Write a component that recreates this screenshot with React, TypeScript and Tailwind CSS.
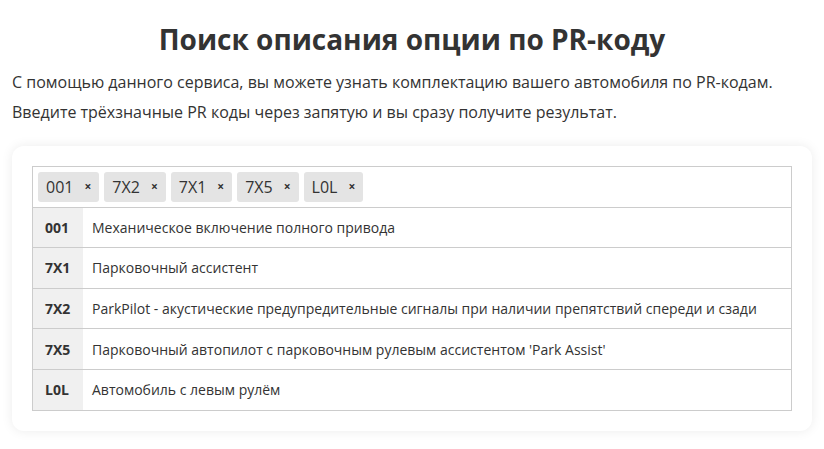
import React from "react";

const tags = ["001", "7X2", "7X1", "7X5", "L0L"];

const rows = [
  { code: "001", text: "Механическое включение полного привода" },
  { code: "7X1", text: "Парковочный ассистент" },
  {
    code: "7X2",
    text: "ParkPilot - акустические предупредительные сигналы при наличии препятствий спереди и сзади",
  },
  { code: "7X5", text: "Парковочный автопилот с парковочным рулевым ассистентом 'Park Assist'" },
  { code: "L0L", text: "Автомобиль с левым рулём" },
];

export default function App() {
  return (
    <div
      className="min-h-screen bg-white px-3 text-[#333]"
      style={{ fontFamily: '"Open Sans", sans-serif' }}
    >
      <h1 className="pt-[23px] text-center text-[28px] font-bold leading-[1.2] text-[#333]">
        Поиск описания опции по PR-коду
      </h1>
      <p className="mt-[13px] text-[16px] leading-[24px]">
        С помощью данного сервиса, вы можете узнать комплектацию вашего автомобиля по PR-кодам.
      </p>
      <p className="mt-[6px] text-[16px] leading-[24px]">
        Введите трёхзначные PR коды через запятую и вы сразу получите результат.
      </p>

      <div className="mt-[22px] rounded-xl bg-white p-5 shadow-[0_0_12px_rgba(0,0,0,0.08)]">
        <div className="border border-[#ccc]">
          <div className="flex flex-wrap gap-[5px] p-[5px]">
            {tags.map((t) => (
              <span
                key={t}
                className="flex h-[30px] items-center rounded-[3px] bg-[#e4e4e4] pl-2 pr-[8px] text-[16px]"
              >
                {t}
                <span className="ml-[11px] text-[12px] font-bold leading-none">×</span>
              </span>
            ))}
          </div>
          {rows.map((r) => (
            <div key={r.code} className="flex h-[40.6px] border-t border-[#ccc] text-[14px]">
              <div className="flex w-[50px] shrink-0 items-center bg-[#f0f0f0] px-3 font-bold">
                {r.code}
              </div>
              <div className="flex items-center pl-[9px]">{r.text}</div>
            </div>
          ))}
        </div>
      </div>
    </div>
  );
}
